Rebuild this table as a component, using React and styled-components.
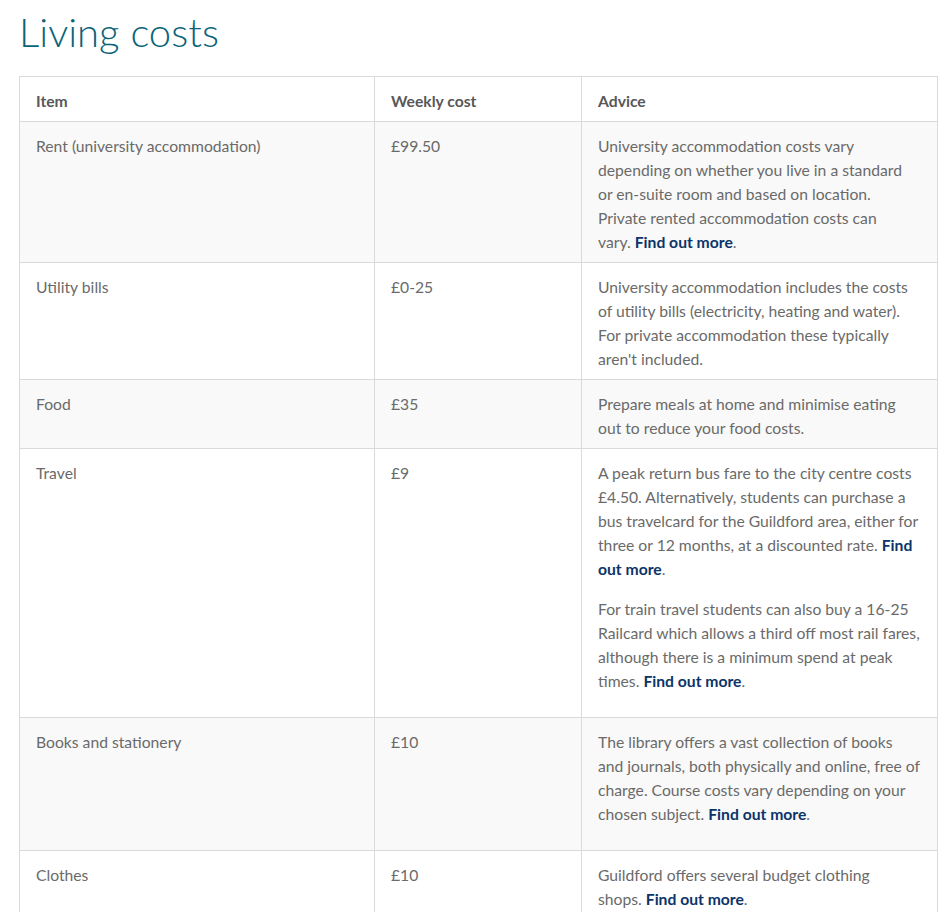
import React from 'react';
import styled, { createGlobalStyle } from 'styled-components';

const GlobalStyle = createGlobalStyle`
  *, *::before, *::after { box-sizing: border-box; }
  html, body { margin: 0; padding: 0; background: #fff; }
  body { font-family: Lato, "Open Sans", sans-serif; color: #666; }
`;

const Page = styled.main`
  padding: 0 12px 0 19px;
`;

const Heading = styled.h1`
  margin: 8px 0 20px 0;
  font-family: Lato, sans-serif;
  font-weight: 300;
  font-size: 40px;
  line-height: 48px;
  color: #0a6479;
`;

const Table = styled.table`
  width: 918px;
  border-collapse: collapse;
  table-layout: fixed;
  font-size: 15.7px;
  line-height: 24px;
`;

const HeadCell = styled.th`
  width: ${p => p.$w}px;
  text-align: left;
  vertical-align: top;
  padding: 12px 16px 8px 16px;
  border: 1px solid #dadada;
  font-weight: 700;
  color: #585858;
  background: #fff;
`;

const Row = styled.tr`
  background: ${p => (p.$striped ? '#f9f9f9' : '#fff')};
`;

const Cell = styled.td`
  vertical-align: top;
  padding: 12px 16px 8px 16px;
  border: 1px solid #dadada;
  color: #6a6a6a;
`;

const Para = styled.p`
  margin: 0 0 16px 0;
`;

const Link = styled.a`
  color: #0b3469;
  font-weight: 700;
  text-decoration: none;
`;

const More = () => <Link href="#">Find out more</Link>;

const rows = [
  {
    item: 'Rent (university accommodation)',
    cost: '£99.50',
    advice: [
      <>University accommodation costs vary depending on whether you live in a standard or{'\u00a0'}en-suite room and based on location. Private rented accommodation costs can vary.{'\u00a0'}<More />.</>,
    ],
  },
  {
    item: 'Utility bills',
    cost: '£0-25',
    advice: [
      <>University accommodation includes the costs of utility bills (electricity, heating and water). For private accommodation these typically aren't included.</>,
    ],
  },
  {
    item: 'Food',
    cost: '£35',
    advice: [<>Prepare meals at home and minimise eating out to reduce your food costs.</>],
  },
  {
    item: 'Travel',
    cost: '£9',
    paras: true,
    advice: [
      <>A peak return bus fare to the city centre costs £4.50. Alternatively, students can purchase a bus travelcard for the Guildford area, either for three or 12 months, at a discounted rate.{'\u00a0'}<More />.</>,
      <>For train travel students can also buy a 16-25 Railcard which allows a third off most rail fares, although there is a minimum spend at peak times.{'\u00a0'}<More />.</>,
    ],
  },
  {
    item: 'Books and stationery',
    cost: '£10',
    paras: true,
    advice: [
      <>The library offers a vast collection of books and journals, both physically and online, free of charge. Course costs vary depending on your chosen subject.{'\u00a0'}<More />.</>,
    ],
  },
  {
    item: 'Clothes',
    cost: '£10',
    paras: true,
    advice: [<>Guildford offers several budget clothing shops.{'\u00a0'}<More />.</>],
  },
];

export default function App() {
  return (
    <>
      <GlobalStyle />
      <Page>
        <Heading>Living costs</Heading>
        <Table>
          <thead>
            <tr>
              <HeadCell $w={355}>Item</HeadCell>
              <HeadCell $w={207}>Weekly cost</HeadCell>
              <HeadCell $w={356}>Advice</HeadCell>
            </tr>
          </thead>
          <tbody>
            {rows.map((r, i) => (
              <Row key={r.item} $striped={i % 2 === 0}>
                <Cell>{r.item}</Cell>
                <Cell>{r.cost}</Cell>
                <Cell>
                  {r.paras
                    ? r.advice.map((a, j) => <Para key={j}>{a}</Para>)
                    : r.advice[0]}
                </Cell>
              </Row>
            ))}
          </tbody>
        </Table>
      </Page>
    </>
  );
}
